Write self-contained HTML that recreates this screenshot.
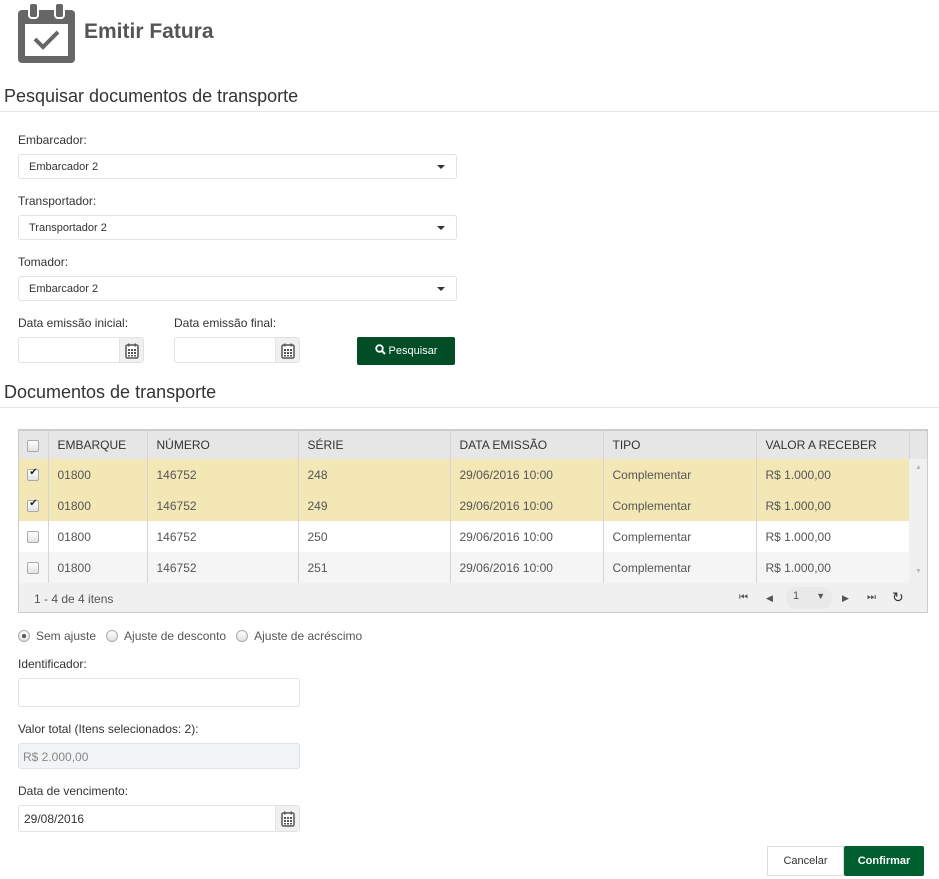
<!DOCTYPE html>
<html><head><meta charset="utf-8"><style>
*{box-sizing:border-box;margin:0;padding:0}
body{width:939px;height:879px;background:#fff;font-family:"Liberation Sans",sans-serif;color:#333;position:relative;overflow:hidden}
.a{position:absolute}
.lbl{position:absolute;left:18px;font-size:12px;color:#333}
.inp{position:absolute;border:1px solid #dde3e8;border-radius:3px;background:#fff;font-size:11px;color:#333}
.sel{left:18px;width:439px;height:25px;padding:6px 10px}
.sel:after{content:"";position:absolute;right:11px;top:10px;border-left:4px solid transparent;border-right:4px solid transparent;border-top:4px solid #333}
.cal{position:absolute;right:0;top:0;bottom:0;width:24px;background:#f0f0f0;border-left:1px solid #e3e3e3;border-radius:0 3px 3px 0}
.cal svg{position:absolute;left:5px;top:5px}
.h2{position:absolute;left:4px;font-size:18px;color:#333}
.hr{position:absolute;left:0;width:939px;height:1px;background:#e5e5e5}
table{border-collapse:collapse;font-size:12px}
td{height:31px;padding:0 0 0 9px;border-left:1px solid #d5d5d5;white-space:nowrap}
td:first-child{border-left:none;padding:0;text-align:center}
.hd td{background:#e6e6e6;color:#333;height:28px}
.y td{background:#f3e7b6;color:#555}
.w td{background:#fff;color:#555}
.g td{background:#f5f5f5;color:#555}
.cb{display:inline-block;width:12px;height:12px;border:1px solid #aaa;border-radius:2px;background:linear-gradient(#fff,#e2e2e2);vertical-align:middle;position:relative}
.cb.c:after{content:"✔";position:absolute;left:1px;top:-3px;font-size:10px;color:#222}
.rd{display:inline-block;width:12px;height:12px;border:1px solid #aaa;border-radius:50%;background:linear-gradient(#fff,#e0e0e0);vertical-align:-2px;margin-right:6px;position:relative}
.rd.on:after{content:"";position:absolute;left:3px;top:3px;width:4px;height:4px;border-radius:50%;background:#555}
</style></head><body>
<svg width="0" height="0" style="position:absolute"><defs><symbol id="ci" viewBox="0 0 14 16"><rect x="1" y="2" width="12" height="13" rx="1.5" fill="#fff" stroke="#555" stroke-width="1.5"/><rect x="3" y="0.5" width="1.5" height="3" fill="#555"/><rect x="9.5" y="0.5" width="1.5" height="3" fill="#555"/><g fill="#555"><rect x="3" y="6" width="2" height="2"/><rect x="6" y="6" width="2" height="2"/><rect x="9" y="6" width="2" height="2"/><rect x="3" y="9" width="2" height="2"/><rect x="6" y="9" width="2" height="2"/><rect x="9" y="9" width="2" height="2"/><rect x="3" y="12" width="2" height="1.5"/><rect x="6" y="12" width="2" height="1.5"/><rect x="9" y="12" width="2" height="1.5"/></g></symbol></defs></svg>
<svg class="a" style="left:18px;top:3px" width="57" height="60" viewBox="0 0 57 60">
<rect x="0" y="7" width="57" height="53" rx="4" fill="#666"/>
<rect x="7" y="21" width="43" height="32" fill="#fff"/>
<rect x="11" y="0" width="9" height="15" rx="3" fill="#666" stroke="#fff" stroke-width="2"/>
<rect x="37" y="0" width="9" height="15" rx="3" fill="#666" stroke="#fff" stroke-width="2"/>
<path d="M17 36 L25 44 L40 29" stroke="#666" stroke-width="4" fill="none"/>
</svg>
<div class="a" style="left:84px;top:20px;font-size:21px;color:#555;font-weight:bold">Emitir Fatura</div>
<div class="h2" style="top:86px">Pesquisar documentos de transporte</div>
<div class="hr" style="top:111px"></div>

<div class="lbl" style="top:133px">Embarcador:</div>
<div class="inp sel" style="top:154px">Embarcador 2</div>
<div class="lbl" style="top:194px">Transportador:</div>
<div class="inp sel" style="top:215px">Transportador 2</div>
<div class="lbl" style="top:255px">Tomador:</div>
<div class="inp sel" style="top:276px">Embarcador 2</div>

<div class="lbl" style="top:316px">Data emissão inicial:</div>
<div class="lbl" style="top:316px;left:174px">Data emissão final:</div>
<div class="inp" style="left:18px;top:337px;width:126px;height:26px"><div class="cal"><svg width="14" height="16"><use href="#ci"/></svg></div></div>
<div class="inp" style="left:174px;top:337px;width:126px;height:26px"><div class="cal"><svg width="14" height="16"><use href="#ci"/></svg></div></div>
<div class="a" style="left:357px;top:337px;width:98px;height:28px;background:#004d26;border-radius:2px;color:#fff;font-size:11px;text-align:center;line-height:28px"><svg width="11" height="11" viewBox="0 0 11 11" style="vertical-align:-1px"><circle cx="4.5" cy="4.5" r="3.3" stroke="#fff" stroke-width="1.8" fill="none"/><path d="M7 7 L10 10" stroke="#fff" stroke-width="2"/></svg> Pesquisar</div>

<div class="h2" style="top:382px">Documentos de transporte</div>
<div class="hr" style="top:407px"></div>

<div class="a" style="left:18px;top:429px;width:910px;height:184px;border:1px solid #ccc;border-top:2px solid #ccc;background:#f0f0f0">
<table style="width:890px">
<colgroup><col style="width:29px"><col style="width:99px"><col style="width:151px"><col style="width:152px"><col style="width:153px"><col style="width:153px"><col style="width:153px"></colgroup>
<tr class="hd"><td><span class="cb"></span></td><td>EMBARQUE</td><td>NÚMERO</td><td>SÉRIE</td><td>DATA EMISSÃO</td><td>TIPO</td><td>VALOR A RECEBER</td></tr>
<tr class="y"><td><span class="cb c"></span></td><td>01800</td><td>146752</td><td>248</td><td>29/06/2016 10:00</td><td>Complementar</td><td>R$ 1.000,00</td></tr>
<tr class="y"><td><span class="cb c"></span></td><td>01800</td><td>146752</td><td>249</td><td>29/06/2016 10:00</td><td>Complementar</td><td>R$ 1.000,00</td></tr>
<tr class="w"><td><span class="cb"></span></td><td>01800</td><td>146752</td><td>250</td><td>29/06/2016 10:00</td><td>Complementar</td><td>R$ 1.000,00</td></tr>
<tr class="g"><td><span class="cb"></span></td><td>01800</td><td>146752</td><td>251</td><td>29/06/2016 10:00</td><td>Complementar</td><td>R$ 1.000,00</td></tr>
</table>
<div class="a" style="left:890px;top:0;width:18px;height:28px;background:#e6e6e6;border-left:1px solid #d5d5d5"></div>
<div class="a" style="left:896px;top:33px;font-size:7px;color:#bbb">▲</div>
<div class="a" style="left:896px;top:137px;font-size:7px;color:#bbb">▼</div>
<div class="a" style="left:15px;top:161px;font-size:12px;color:#555">1 - 4 de 4 itens</div>
<div class="a" style="left:720px;top:161px;font-size:10px;color:#555">⏮&#xFE0E;</div>
<div class="a" style="left:747px;top:162px;font-size:9px;color:#555">◀</div>
<div class="a" style="left:767px;top:156px;width:46px;height:22px;border-radius:10px;background:#e9e9e9;font-size:11px;color:#555;padding:3px 0 0 7px">1 <span style="margin-left:14px;font-size:9px">▼</span></div>
<div class="a" style="left:823px;top:162px;font-size:9px;color:#555">▶</div>
<div class="a" style="left:848px;top:161px;font-size:10px;color:#555">⏭&#xFE0E;</div>
<div class="a" style="left:873px;top:158px;font-size:14px;color:#333">↻</div>
</div>

<div class="a" style="left:18px;top:629px;font-size:12px;color:#555"><span class="rd on"></span>Sem ajuste &nbsp;&nbsp;<span class="rd"></span>Ajuste de desconto &nbsp;&nbsp;<span class="rd"></span>Ajuste de acréscimo</div>

<div class="lbl" style="top:657px">Identificador:</div>
<div class="inp" style="left:18px;top:678px;width:282px;height:29px"></div>
<div class="lbl" style="top:722px">Valor total (Itens selecionados: 2):</div>
<div class="inp" style="left:18px;top:743px;width:282px;height:26px;background:#f1f3f4;color:#888;padding:6px 4px;font-size:12px">R$ 2.000,00</div>
<div class="lbl" style="top:784px">Data de vencimento:</div>
<div class="inp" style="left:18px;top:805px;width:282px;height:27px;padding:6px 5px;font-size:12px">29/08/2016<div class="cal"><svg width="14" height="16"><use href="#ci"/></svg></div></div>

<div class="a" style="left:767px;top:846px;width:77px;height:30px;border:1px solid #ddd;background:#fff;font-size:11px;color:#333;text-align:center;line-height:28px">Cancelar</div>
<div class="a" style="left:844px;top:846px;width:80px;height:30px;background:#005f2e;border-radius:2px;font-size:11px;color:#fff;font-weight:bold;text-align:center;line-height:30px">Confirmar</div>
</body></html>
